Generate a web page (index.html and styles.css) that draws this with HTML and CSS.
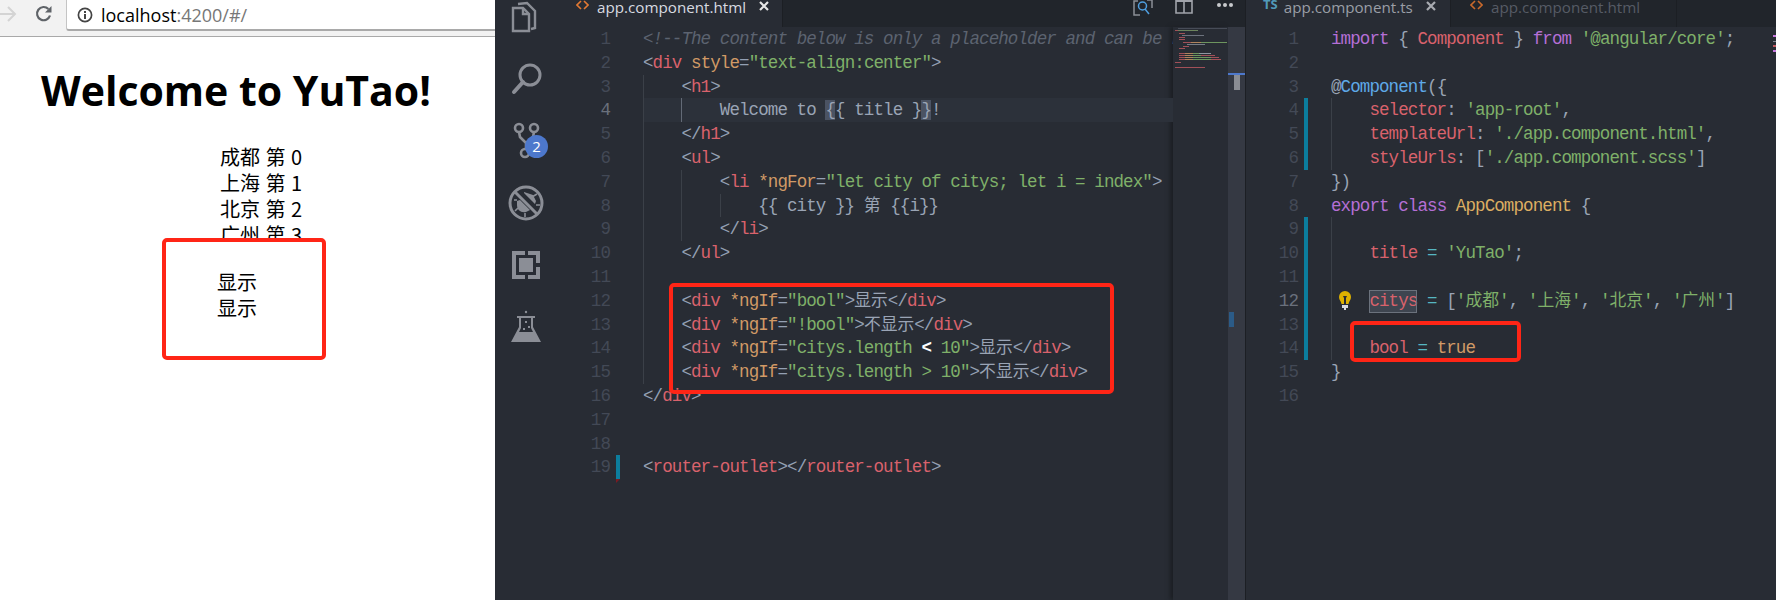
FILE: index.html
```html
<!DOCTYPE html>
<html lang="zh">
<head>
<meta charset="utf-8">
<title>YuTao</title>
<link rel="stylesheet" href="styles.css">
</head>
<body>
<div class="app">
  <section class="browser">
    <div class="toolbar">
      <svg class="tb-back" width="18" height="16" viewBox="0 0 18 16"><path d="M1 8h15M9 1l7 7-7 7" fill="none" stroke="#d4d4d4" stroke-width="2"/></svg>
      <svg class="tb-reload" width="18" height="18" viewBox="0 0 18 18"><path d="M15 10.5A6.6 6.6 0 1 1 13.4 4" fill="none" stroke="#5f6368" stroke-width="2.2"/><path d="M16.5 1v6.5H10z" fill="#5f6368"/></svg>
      <div class="address">
        <svg width="16" height="16" viewBox="0 0 16 16"><circle cx="8" cy="8" r="6.6" fill="none" stroke="#444" stroke-width="1.7"/><path d="M7 7h2v5H7zM7 4h2v2H7z" fill="#444"/></svg>
        <span class="url">localhost<span class="url-dim">:4200/#/</span></span>
      </div>
    </div>
    <div class="page">
      <h1>Welcome to YuTao!</h1>
      <ul>
        <li>成都 第 0</li>
        <li>上海 第 1</li>
        <li>北京 第 2</li>
        <li>广州 第 3</li>
      </ul>
      <div class="note note-page"></div>
      <div class="shown first">显示</div>
      <div class="shown">显示</div>
    </div>
  </section>

  <section class="vscode">
    <nav class="activity">
      <div class="act"><svg width="40" height="40" viewBox="0 0 40 40"><g fill="none" stroke="#8b8e96" stroke-width="2.4"><path d="M7 11h10l6 6v17H7z"/><path d="M17 11v6h6"/><path d="M12 7l9-1 8 8v17l-4 1"/></g></svg></div>
      <div class="act"><svg width="40" height="40" viewBox="0 0 40 40"><circle cx="24" cy="16" r="10" fill="none" stroke="#8b8e96" stroke-width="3"/><path d="M17 23L8 33" stroke="#8b8e96" stroke-width="4" stroke-linecap="round"/></svg></div>
      <div class="act"><svg width="40" height="40" viewBox="0 0 40 40"><g fill="none" stroke="#8b8e96" stroke-width="2.6"><circle cx="13" cy="7" r="4"/><circle cx="28" cy="7" r="4"/><circle cx="19" cy="32" r="4"/><path d="M13 11l1 5 6 6 7-6 1-5M20 22v6"/></g></svg><span class="badge">2</span></div>
      <div class="act"><svg width="40" height="40" viewBox="0 0 40 40"><circle cx="20" cy="20" r="16" fill="none" stroke="#8b8e96" stroke-width="3"/><path d="M9 9l22 22" stroke="#8b8e96" stroke-width="3"/><path d="M18 9l9 3 3 6-1 3-11-11zM11 18l3-1 10 10-4 2c-5 1-9-2-9-7z" fill="#8b8e96"/><path d="M26 14l5-3M30 22h4M12 25l-3 3M8 17h3M19 30v4" stroke="#8b8e96" stroke-width="1.6"/></svg></div>
      <div class="act"><svg width="40" height="40" viewBox="0 0 40 40"><path d="M6 6h13v4h-9v20h9v4H6zM22 6h12v12h-4v-8h-8zM30 22h4v12H22v-4h8z" fill="#8b8e96"/><rect x="13" y="13" width="14" height="14" fill="#8b8e96"/></svg></div>
      <div class="act"><svg width="40" height="40" viewBox="0 0 40 40"><path d="M11 9h18v2h-2v9l8 15H5l8-15v-9h-2z" fill="#8b8e96"/><path d="M15 11h10v10l2 4H13l2-4z" fill="#282c34"/><path d="M13 25h14l5 9H8z" fill="#8b8e96"/><circle cx="20" cy="5" r="1.2" fill="#8b8e96"/><path d="M19 14h2v2h-2zM22 19h2v2h-2zM17 21h2v2h-2z" fill="#8b8e96"/></svg></div>
    </nav>

    <div class="group group-left">
      <div class="tabs">
        <div class="tab tab-active tab-html">
          <svg class="tab-icon" width="13" height="11" viewBox="0 0 13 11"><path d="M5 1L1 5l4 4M8 1l4 4-4 4" fill="none" stroke="#e37933" stroke-width="1.6"/></svg>
          <span class="tab-name">app.component.html</span>
          <svg class="tab-x" width="10" height="10" viewBox="0 0 10 10"><path d="M1 1l8 8M9 1L1 9" stroke="#e6e6e6" stroke-width="2.2"/></svg>
        </div>
        <div class="actions">
          <div class="action"><svg width="20" height="17" viewBox="0 0 20 17"><path d="M5 1H1v14h6M14 0h5v8" fill="none" stroke="#8b8e96" stroke-width="1.5"/><circle cx="9.500" cy="6" r="4" fill="none" stroke="#4f9fe0" stroke-width="1.500"/><path d="M12 9l4 5" stroke="#4f9fe0" stroke-width="1.500"/></svg></div>
          <div class="action"><svg width="18" height="14" viewBox="0 0 18 14"><path d="M1 0v13h16V0M9 0v13" fill="none" stroke="#a0a3aa" stroke-width="1.600"/><path d="M1 0h16v2H1z" fill="#a0a3aa"/></svg></div>
          <div class="action"><svg width="18" height="6" viewBox="0 0 18 6"><circle cx="3" cy="3" r="2" fill="#c8cacd"/><circle cx="9" cy="3" r="2" fill="#c8cacd"/><circle cx="15" cy="3" r="2" fill="#c8cacd"/></svg></div>
        </div>
      </div>
      <div class="editor-wrap">
        <div class="editor editor-html">
          <div class="row"><span class="ln">1</span><span class="chg"></span><span class="code"><span class="c">&lt;!--The content below is only a placeholder and can be replaced. --&gt;</span></span></div>
          <div class="row"><span class="ln">2</span><span class="chg"></span><span class="code"><span class="p">&lt;</span><span class="t">div</span> <span class="a">style</span><span class="p">=</span><span class="s">"text-align:center"</span><span class="p">&gt;</span></span></div>
          <div class="row"><span class="ln">3</span><span class="chg"></span><span class="code"><span class="ind"></span><span class="p">&lt;</span><span class="t">h1</span><span class="p">&gt;</span></span></div>
          <div class="row"><span class="ln ln-on">4</span><span class="chg"></span><span class="code code-on"><span class="ind"></span><span class="ind ind-on"></span><span class="x">Welcome to <span class="br">{</span>{ title }<span class="br">}</span>!</span></span></div>
          <div class="row"><span class="ln">5</span><span class="chg"></span><span class="code"><span class="ind"></span><span class="p">&lt;/</span><span class="t">h1</span><span class="p">&gt;</span></span></div>
          <div class="row"><span class="ln">6</span><span class="chg"></span><span class="code"><span class="ind"></span><span class="p">&lt;</span><span class="t">ul</span><span class="p">&gt;</span></span></div>
          <div class="row"><span class="ln">7</span><span class="chg"></span><span class="code"><span class="ind"></span><span class="ind"></span><span class="p">&lt;</span><span class="t">li</span> <span class="a">*ngFor</span><span class="p">=</span><span class="s">"let city of citys; let i = index"</span><span class="p">&gt;</span></span></div>
          <div class="row"><span class="ln">8</span><span class="chg"></span><span class="code"><span class="ind"></span><span class="ind"></span><span class="ind"></span><span class="x">{{ city }} <span class="cjk">第</span> {{i}}</span></span></div>
          <div class="row"><span class="ln">9</span><span class="chg"></span><span class="code"><span class="ind"></span><span class="ind"></span><span class="p">&lt;/</span><span class="t">li</span><span class="p">&gt;</span></span></div>
          <div class="row"><span class="ln">10</span><span class="chg"></span><span class="code"><span class="ind"></span><span class="p">&lt;/</span><span class="t">ul</span><span class="p">&gt;</span></span></div>
          <div class="row"><span class="ln">11</span><span class="chg"></span><span class="code"><span class="ind"></span></span></div>
          <div class="row"><span class="ln">12</span><span class="chg"></span><span class="code"><span class="ind"></span><span class="p">&lt;</span><span class="t">div</span> <span class="a">*ngIf</span><span class="p">=</span><span class="s">"bool"</span><span class="p">&gt;</span><span class="x cjk">显示</span><span class="p">&lt;/</span><span class="t">div</span><span class="p">&gt;</span></span></div>
          <div class="row"><span class="ln">13</span><span class="chg"></span><span class="code"><span class="ind"></span><span class="p">&lt;</span><span class="t">div</span> <span class="a">*ngIf</span><span class="p">=</span><span class="s">"!bool"</span><span class="p">&gt;</span><span class="x cjk">不显示</span><span class="p">&lt;/</span><span class="t">div</span><span class="p">&gt;</span></span></div>
          <div class="row"><span class="ln">14</span><span class="chg"></span><span class="code"><span class="ind"></span><span class="p">&lt;</span><span class="t">div</span> <span class="a">*ngIf</span><span class="p">=</span><span class="s">"citys.length <span class="lt">&lt;</span> 10"</span><span class="p">&gt;</span><span class="x cjk">显示</span><span class="p">&lt;/</span><span class="t">div</span><span class="p">&gt;</span></span></div>
          <div class="row"><span class="ln">15</span><span class="chg"></span><span class="code"><span class="ind"></span><span class="p">&lt;</span><span class="t">div</span> <span class="a">*ngIf</span><span class="p">=</span><span class="s">"citys.length &gt; 10"</span><span class="p">&gt;</span><span class="x cjk">不显示</span><span class="p">&lt;/</span><span class="t">div</span><span class="p">&gt;</span></span></div>
          <div class="row"><span class="ln">16</span><span class="chg"></span><span class="code"><span class="p">&lt;/</span><span class="t">div</span><span class="p">&gt;</span></span></div>
          <div class="row"><span class="ln">17</span><span class="chg"></span><span class="code"></span></div>
          <div class="row"><span class="ln">18</span><span class="chg"></span><span class="code"></span></div>
          <div class="row"><span class="ln">19</span><span class="chg chg-on chg-del"></span><span class="code"><span class="p">&lt;</span><span class="t">router-outlet</span><span class="p">&gt;&lt;/</span><span class="t">router-outlet</span><span class="p">&gt;</span></span></div>
          <div class="note note-html"></div>
        </div>
        <div class="minimap">
          <svg width="55" height="60" viewBox="0 0 55 60">
            <g opacity="0.8">
              <rect x="5" y="1" width="49" height="1" fill="#4f5560"/>
              <rect x="2" y="3" width="3" height="1" fill="#c05a62"/><rect x="5" y="3" width="20" height="1" fill="#7e9a68"/>
              <rect x="6" y="6" width="6" height="1" fill="#c05a62"/>
              <rect x="9" y="8" width="22" height="1" fill="#7f8591"/>
              <rect x="6" y="10" width="6" height="1" fill="#c05a62"/>
              <rect x="6" y="12" width="6" height="1" fill="#c05a62"/>
              <rect x="10" y="15" width="8" height="1" fill="#c05a62"/><rect x="18" y="15" width="10" height="1" fill="#d19a66"/><rect x="28" y="15" width="26" height="1" fill="#7fb069"/>
              <rect x="14" y="17" width="18" height="1" fill="#8a909b"/>
              <rect x="10" y="19" width="6" height="1" fill="#c05a62"/>
              <rect x="6" y="21" width="6" height="1" fill="#c05a62"/>
              <rect x="6" y="26" width="6" height="1" fill="#c05a62"/><rect x="12" y="26" width="8" height="1" fill="#d19a66"/><rect x="20" y="26" width="6" height="1" fill="#7fb069"/><rect x="26" y="26" width="12" height="1" fill="#a9b0ba"/>
              <rect x="6" y="28" width="6" height="1" fill="#c05a62"/><rect x="12" y="28" width="8" height="1" fill="#d19a66"/><rect x="20" y="28" width="8" height="1" fill="#7fb069"/><rect x="28" y="28" width="14" height="1" fill="#c05a62"/>
              <rect x="6" y="30" width="6" height="1" fill="#c05a62"/><rect x="12" y="30" width="8" height="1" fill="#d19a66"/><rect x="20" y="30" width="18" height="1" fill="#7fb069"/><rect x="38" y="30" width="8" height="1" fill="#c05a62"/>
              <rect x="6" y="32" width="6" height="1" fill="#c05a62"/><rect x="12" y="32" width="8" height="1" fill="#d19a66"/><rect x="20" y="32" width="18" height="1" fill="#7fb069"/><rect x="38" y="32" width="10" height="1" fill="#c05a62"/>
              <rect x="2" y="35" width="6" height="1" fill="#c05a62"/>
              <rect x="2" y="40" width="30" height="1" fill="#c05a62"/>
            </g>
          </svg>
        </div>
        <div class="scroll"><div class="scroll-mark"></div><div class="scroll-thumb"></div><div class="scroll-find"></div></div>
      </div>
    </div>

    <div class="group group-right">
      <div class="tabs">
        <div class="tab tab-active tab-ts">
          <span class="ts-icon">TS</span>
          <span class="tab-name">app.component.ts</span>
          <svg class="tab-x" width="10" height="10" viewBox="0 0 10 10"><path d="M1 1l8 8M9 1L1 9" stroke="#a8abb1" stroke-width="2.200"/></svg>
        </div>
        <div class="tab tab-idle">
          <svg class="tab-icon" width="13" height="11" viewBox="0 0 13 11"><path d="M5 1L1 5l4 4M8 1l4 4-4 4" fill="none" stroke="#c9692c" stroke-width="1.600"/></svg>
          <span class="tab-name">app.component.html</span>
        </div>
      </div>
      <div class="editor editor-ts">
        <div class="row"><span class="ln">1</span><span class="chg"></span><span class="code"><span class="k">import</span> <span class="x">{</span> <span class="t">Component</span> <span class="x">}</span> <span class="k">from</span> <span class="s">'@angular/core'</span><span class="x">;</span></span></div>
        <div class="row"><span class="ln">2</span><span class="chg"></span><span class="code"></span></div>
        <div class="row"><span class="ln">3</span><span class="chg"></span><span class="code"><span class="x">@</span><span class="b">Component</span><span class="x">({</span></span></div>
        <div class="row"><span class="ln">4</span><span class="chg chg-on"></span><span class="code"><span class="ind"></span><span class="t">selector</span><span class="x">:</span> <span class="s">'app-root'</span><span class="x">,</span></span></div>
        <div class="row"><span class="ln">5</span><span class="chg chg-on"></span><span class="code"><span class="ind"></span><span class="t">templateUrl</span><span class="x">:</span> <span class="s">'./app.component.html'</span><span class="x">,</span></span></div>
        <div class="row"><span class="ln">6</span><span class="chg chg-on"></span><span class="code"><span class="ind"></span><span class="t">styleUrls</span><span class="x">:</span> <span class="x">[</span><span class="s">'./app.component.scss'</span><span class="x">]</span></span></div>
        <div class="row"><span class="ln">7</span><span class="chg"></span><span class="code"><span class="x">})</span></span></div>
        <div class="row"><span class="ln">8</span><span class="chg"></span><span class="code"><span class="k">export</span> <span class="k">class</span> <span class="y">AppComponent</span> <span class="x">{</span></span></div>
        <div class="row"><span class="ln">9</span><span class="chg chg-on"></span><span class="code"><span class="ind"></span></span></div>
        <div class="row"><span class="ln">10</span><span class="chg chg-on"></span><span class="code"><span class="ind"></span><span class="t">title</span> <span class="cy">=</span> <span class="s">'YuTao'</span><span class="x">;</span></span></div>
        <div class="row"><span class="ln">11</span><span class="chg chg-on"></span><span class="code"><span class="ind"></span></span></div>
        <div class="row"><span class="ln ln-on">12</span><span class="chg chg-on"></span><span class="code"><span class="ind"></span><span class="t sel">citys</span> <span class="cy">=</span> <span class="x">[</span><span class="s">'<span class="cjk">成都</span>'</span><span class="x">,</span> <span class="s">'<span class="cjk">上海</span>'</span><span class="x">,</span> <span class="s">'<span class="cjk">北京</span>'</span><span class="x">,</span> <span class="s">'<span class="cjk">广州</span>'</span><span class="x">]</span></span>
          <svg class="bulb" width="14" height="20" viewBox="0 0 14 20"><path d="M7 1a6 6 0 0 0-6 6c0 3 2 4 2.500 7h7c.5-3 2.500-4 2.500-7a6 6 0 0 0-6-6z" fill="#ddb100"/><path d="M5 6h4l-1 2v6H6V8z" fill="#282c34"/><path d="M4 15h6v3H8v2H6v-2H4z" fill="#d7dae0"/></svg>
        </div>
        <div class="row"><span class="ln">13</span><span class="chg chg-on"></span><span class="code"><span class="ind"></span></span></div>
        <div class="row"><span class="ln">14</span><span class="chg chg-on"></span><span class="code"><span class="ind"></span><span class="t">bool</span> <span class="cy">=</span> <span class="a">true</span></span></div>
        <div class="row"><span class="ln">15</span><span class="chg"></span><span class="code"><span class="x">}</span></span></div>
        <div class="row"><span class="ln">16</span><span class="chg"></span><span class="code"></span></div>
        <div class="note note-ts"></div>
        <svg class="mini-ts" width="3" height="20" viewBox="0 0 3 20"><rect y="0" width="3" height="2" fill="#c678dd"/><rect y="6" width="3" height="1" fill="#7f8591"/><rect y="10" width="3" height="2" fill="#c05a62"/><rect y="15" width="3" height="2" fill="#c678dd"/></svg>
      </div>
    </div>
  </section>
</div>
</body>
</html>
```
FILE: styles.css
```css
* { box-sizing: border-box; }
html, body { margin: 0; padding: 0; }
body { width: 1776px; height: 600px; overflow: hidden; background: #282c34; }
.app { display: flex; height: 600px; }

/* browser pane */
.browser { width: 495px; flex: none; background: #fff; font-family: "Open Sans", "Noto Sans CJK SC", sans-serif; color: #000; overflow: hidden; }
.toolbar { height: 37px; background: #f2f2f2; border-bottom: 1px solid #a9a9a9; display: flex; align-items: flex-start; }
.tb-back { margin: 6px 0 0 -1px; flex: none; }
.tb-reload { margin: 5px 0 0 18px; flex: none; }
.address { margin-left: 13px; flex: 1; height: 31px; background: #fff; border-left: 1px solid #c4c4c4; border-bottom: 2px solid #a9a9a9; border-bottom-left-radius: 3px; display: flex; align-items: center; padding-left: 10px; gap: 8px; }
.url { font-family: "Open Sans", sans-serif; font-size: 18px; line-height: 28px; color: #000; }
.url-dim { color: #777; }
.page { position: relative; width: 472px; padding-top: 26px; text-align: center; }
h1 { margin: 0; font-size: 41px; line-height: 54px; font-weight: 700; font-family: "Open Sans", sans-serif; }
ul { list-style: none; margin: 27px 0 0; padding: 0 0 0 50px; font-size: 20px; line-height: 26px; word-spacing: 1px; font-family: "Noto Sans CJK SC", "Open Sans", sans-serif; }
.shown { position: relative; padding-left: 2px; font-size: 20px; line-height: 26px; font-family: "Noto Sans CJK SC", sans-serif; }
.shown.first { margin-top: 21px; }
.note { position: absolute; border: 4px solid #ff2516; border-radius: 5px; }
.note-page { left: 162px; top: 201px; width: 164px; height: 122px; background: #fff; }

/* vscode */
.vscode { flex: 1; display: flex; min-width: 0; font-family: "Liberation Mono", monospace; }
.activity { width: 60px; flex: none; background: #282c34; overflow: hidden; }
.act { position: relative; height: 62px; display: flex; align-items: center; justify-content: center; padding-left: 2px; }
.act:first-child { margin-top: -14px; }
.badge { position: absolute; left: 30px; top: 25px; width: 23px; height: 23px; border-radius: 50%; background: #4d78cc; color: #fff; font: 15px/23px "Open Sans", sans-serif; text-align: center; }

.group { display: flex; flex-direction: column; min-width: 0; }
.group-left { width: 690px; flex: none; }
.group-right { flex: 1; border-left: 1px solid #1c1f24; }
.tabs { height: 27px; flex: none; background: #21252b; display: flex; overflow: hidden; }
.tab { height: 27px; display: flex; align-items: flex-start; font-family: "Open Sans", sans-serif; font-size: 15.2px; line-height: 15px; white-space: nowrap; }
.tab-active { background: #282c34; color: #d7dae0; border-right: 1px solid #1c1f24; }
.tab-html { width: 228px; padding-left: 21px; }
.tab-ts { width: 205px; padding-left: 17px; color: #9a9ea6; }
.tab-idle { width: 226px; padding-left: 19px; background: #21252b; color: #565b65; border-right: 1px solid #1c1f24; }
.tab-icon { flex: none; }
.tab-name { margin-left: 8px; }
.ts-icon + .tab-name { margin-left: 6px; }
.tab-x { margin: 1px 0 0 13px; flex: none; }
.ts-icon { font: 700 13px/13px "Open Sans", sans-serif; color: #519aba; margin-top: -2px; }
.actions { margin-left: auto; display: flex; }
.action { width: 41px; display: flex; justify-content: center; align-items: flex-start; }
.action:last-child { padding-top: 2px; }

.editor-wrap { flex: 1; display: flex; min-height: 0; }
.editor { position: relative; font-size: 17.5px; letter-spacing: -0.9px; color: #abb2bf; }
.editor-html { flex: 1; min-width: 0; }
.editor-ts { flex: 1; }
.row { position: relative; display: flex; height: 23.8px; line-height: 24.6px; white-space: pre; }
.ln { flex: none; text-align: right; color: #434956; }
.editor-html .ln { width: 55px; }
.editor-ts .ln { width: 52px; }
.ln-on { color: #6a707c; }
.chg { flex: none; width: 4px; margin: 0 23px 0 6px; position: relative; }
.chg-on { background: #0c7d9d; }
.chg-del::after { content: ""; position: absolute; left: 0; top: 100%; border-top: 4px solid #7a1b22; border-right: 4px solid transparent; }
.code { flex: 1; min-width: 0; overflow: hidden; }
.code-on { background: #2c313a; }
.ind { display: inline-block; width: 38.4px; height: 23.8px; vertical-align: top; border-left: 1px solid #3b4048; }
.ind-on { border-left-color: #636a76; }
.cjk { font-family: "Noto Sans CJK SC", sans-serif; font-size: 16.8px; letter-spacing: 0; line-height: 20px; }
.c { color: #5c6370; font-style: italic; }
.p { color: #94a0b3; }
.t { color: #d9626c; }
.a { color: #d19a66; }
.s { color: #7fb069; }
.x { color: #9aa4b5; }
.k { color: #b56fd6; }
.b { color: #5ea9e8; }
.y { color: #dcae62; }
.cy { color: #56b6c2; }
.lt { color: #fff; font-weight: 700; }
.br { background: #4b5363; }
.sel { display: inline-block; height: 23px; line-height: 23px; background: #3e4550; outline: 1px solid #6b727d; outline-offset: -1px; }
.bulb { position: absolute; left: 92px; top: 1px; }

.minimap { width: 55px; flex: none; background: #282c34; box-shadow: -3px 0 4px #1c1f24; }
.minimap svg { display: block; }
.scroll { position: relative; width: 17px; flex: none; background: #353943; }
.scroll-mark { position: absolute; left: 0; right: 0; top: 46px; height: 2px; background: #4d78cc; }
.scroll-thumb { position: absolute; left: 6px; width: 6px; top: 48px; height: 15px; background: #8a8d94; }
.scroll-find { position: absolute; left: 1px; width: 5px; top: 285px; height: 15px; background: #2b5b87; }

.note-html { left: 114px; top: 256px; width: 445px; height: 111px; }
.note-ts { left: 104px; top: 294px; width: 171px; height: 41px; }
.mini-ts { position: absolute; right: 0; top: 8px; }
```
